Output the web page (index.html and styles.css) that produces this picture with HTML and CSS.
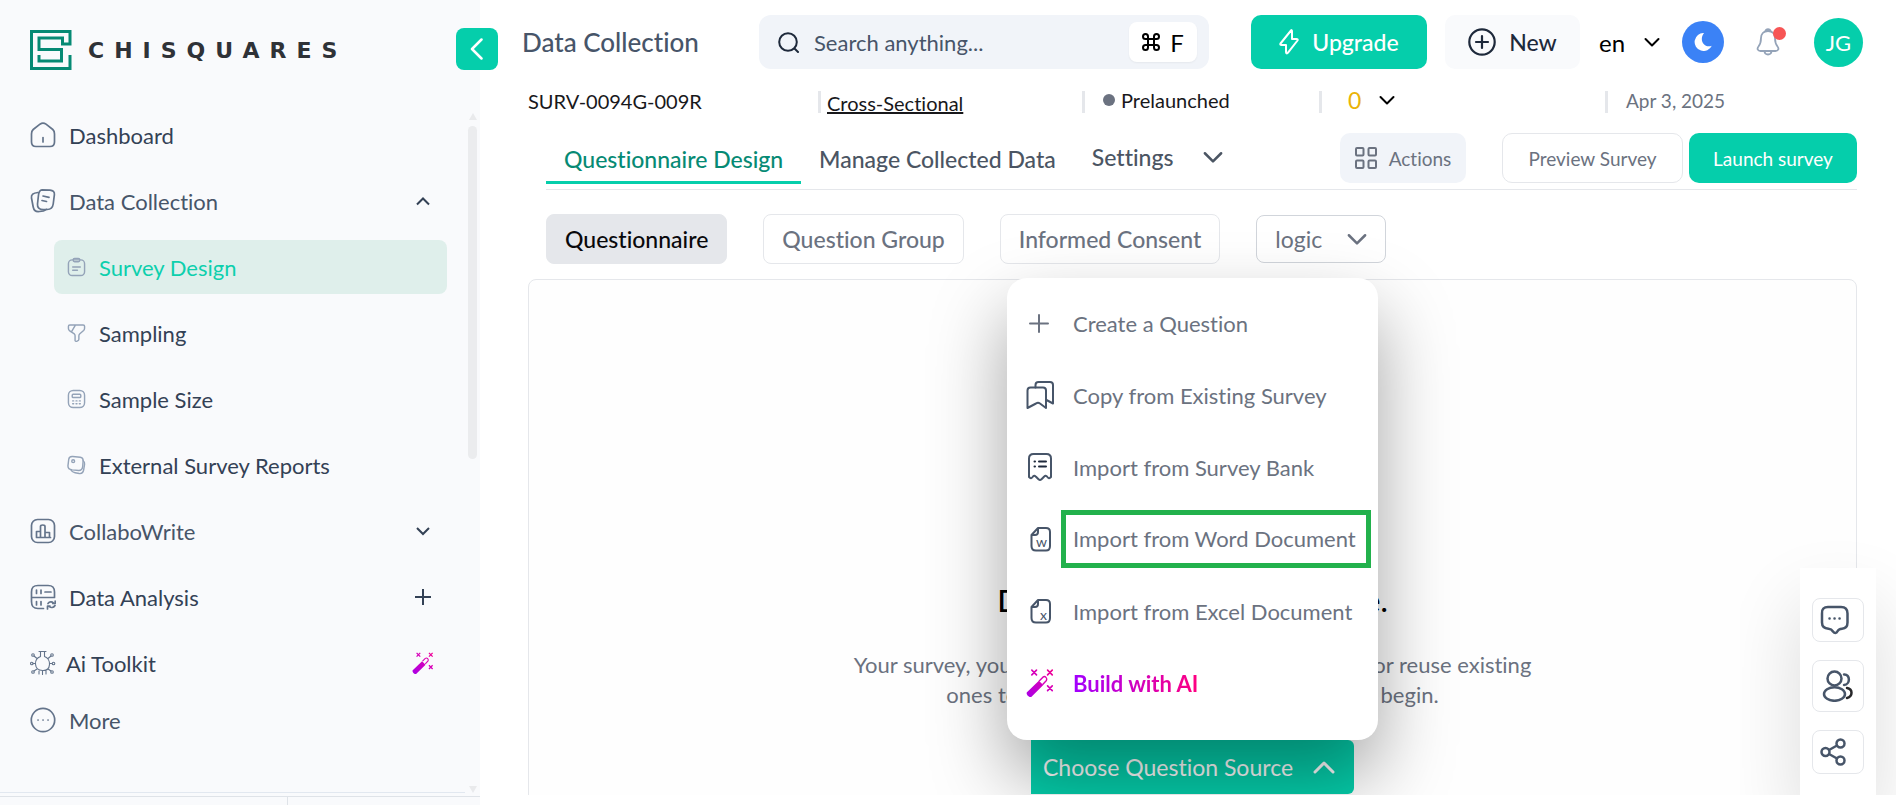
FILE: index.html
```html
<!DOCTYPE html>
<html lang="en">
<head>
    <meta charset="UTF-8">
    <meta name="viewport" content="width=device-width, initial-scale=1.0">
    <title>Chisquares - Data Collection</title>
    <link rel="stylesheet" href="styles.css">
</head>
<body>
    <aside class="sidebar">
        <div class="brand">
            <svg class="logo" width="42" height="40" viewBox="0 0 42 40" fill="none" stroke="#068a74" stroke-width="3">
                <path d="M40 25v13.500H1.500V1.500H40V14H32.500V8H9v11.500h22.500V31H9v-6"/>
            </svg>
            <span class="brand-name">CHISQUARES</span>
            <button class="collapse" aria-label="Collapse menu">
                <svg width="14" height="22" viewBox="0 0 14 22" fill="none" stroke="#fff" stroke-width="2.500" stroke-linecap="round" stroke-linejoin="round"><path d="M11.500 1.500L2 11l9.500 9.500"/></svg>
            </button>
        </div>
        <div class="nav-wrap">
            <nav class="nav">
                <a href="#" class="nav-item dark">
                    <svg class="icon" viewBox="0 0 26 26"><path d="M10 2.200L3.200 7.500C1.500 9 1.500 9.800 1.500 12v8c0 3.500 1.500 4.500 4.500 4.500h14c3 0 4.500-1 4.500-4.500v-8c0-2.200 0-3-1.700-4.500L16 2.200c-2-1.500-4-1.500-6 0z"/><path d="M13 15.500v4.500"/></svg>
                    <span>Dashboard</span>
                </a>
                <a href="#" class="nav-item">
                    <svg class="icon" viewBox="0 0 26 26"><path d="M12 1.800l8 .3c3 .3 4.700 1.800 4.400 4.500l-1.200 9.400c-.5 3.500-2.500 5.500-6 5.500h-4c-4 0-6-2-5.700-5.500l1-9c.4-3.500 1.500-5 3.500-5.200z"/><path d="M8 4.500C3 5 1 6.500 1.500 10l1.700 9c.7 3.500 3 5 6.300 4.500l4-.7c1.500-.3 2.300-.7 3-1.500M13 8l6 1.300M12 12.500l4.500 1"/></svg>
                    <span>Data Collection</span>
                    <svg class="arrow" viewBox="0 0 16 16"><path d="M2 11.500l6-6 6 6"/></svg>
                </a>
                <a href="#" class="nav-item sub active">
                    <svg class="icon small" viewBox="0 0 20 20"><rect x="1.500" y="2.500" width="17" height="16.500" rx="4"/><rect x="6.500" y="1" width="7" height="3.500" rx="1.500"/><path d="M6 10h8M6 13.500h5"/></svg>
                    <span>Survey Design</span>
                </a>
                <a href="#" class="nav-item sub dark">
                    <svg class="icon small" viewBox="0 0 20 20"><path d="M3 1.500h14c1 0 1.500.7 1.500 1.500v2c0 1-.4 1.700-1 2.300l-4 3.500c-.8.700-1 1.300-1 2.200v3.500c0 1.700-3.500 3.300-4 1.500v-5c0-.8-.2-1.400-.8-2L2.500 7.500c-.6-.7-1-1.500-1-2.300V3c0-.8.600-1.500 1.500-1.500zM9 1.500L4.500 9"/></svg>
                    <span>Sampling</span>
                </a>
                <a href="#" class="nav-item sub dark">
                    <svg class="icon small" viewBox="0 0 20 20"><rect x="1.500" y="1" width="17" height="18" rx="5"/><rect x="5.500" y="5" width="9" height="3.500" rx="1"/><path d="M6 12h1M9.500 12h1M13 12h1M6 15h1M9.500 15h1M13 15h1"/></svg>
                    <span>Sample Size</span>
                </a>
                <a href="#" class="nav-item sub dark">
                    <svg class="icon small" viewBox="0 0 20 20"><path d="M6 1l8 .8c2.300.3 3 1.500 3 3.500l-.5 6.500c-.4 2.700-1.700 4-4 4l-7-.7C2.300 14.700 1 13.500 1 11l.8-6.800C2 2 3.500.8 6 1z"/><circle cx="6.500" cy="6" r="1.500"/><path d="M17 5.500c1.500 1 1.700 2 1.500 3.500l-1 6.500c-.5 2.500-2 3.800-4.500 3.500l-4.500-.8c-2-.4-3.500-1.200-4.500-3.200"/></svg>
                    <span>External Survey Reports</span>
                </a>
                <a href="#" class="nav-item">
                    <svg class="icon" viewBox="0 0 26 26"><rect x="1.500" y="1.500" width="23" height="23" rx="6"/><path d="M6.500 19.500h14M6.500 19.500v-6h4v6M10.500 19.500v-11c0-2 4.500-2 4.500 0v11M15 14.500h4.500v5"/></svg>
                    <span>CollaboWrite</span>
                    <svg class="arrow" viewBox="0 0 16 16"><path d="M2 5l6 6 6-6"/></svg>
                </a>
                <a href="#" class="nav-item dark">
                    <svg class="icon" viewBox="0 0 26 26"><path d="M13.500 24.500H8c-5 0-6.500-2-6.500-7V8c0-5 2-6.500 6.500-6.500h10c5 0 6.500 2 6.500 6.500v5.500h-23M6.500 6v3.500M11 6v3.500M15 8h6M6.500 17.500V21M11 17.500V21M18 19.500c1.500-2 4-2 5.500-.5M25.200 17v2.500h-2.500M25 21.500c-1.500 2.500-4 2.500-6 .8M17.500 25v-2.800H20"/></svg>
                    <span>Data Analysis</span>
                    <svg class="arrow plus" viewBox="0 0 16 16"><path d="M8 0v16M0 8h16"/></svg>
                </a>
                <a href="#" class="nav-item dark ai">
                    <svg class="icon thin" viewBox="0 0 26 26"><path d="M9 1.500h7M10.500 1.500v5C3.500 9 3.500 20 12.500 20.500S21.500 9 14.500 6.500v-5M4 6l3 2.500M21 6l-3 2.500M3 13.500h2M20 13.500h2M4 21l3-2M21 21l-3-2M9 21v3M12.500 21v3.500M16 21v3"/><circle cx="3" cy="5" r="1.300"/><circle cx="22" cy="5" r="1.300"/><circle cx="1.800" cy="13.500" r="1.300"/><circle cx="23.500" cy="13.500" r="1.300"/><circle cx="3" cy="22" r="1.300"/><circle cx="22" cy="22" r="1.300"/></svg>
                    <span>Ai Toolkit</span>
                    <svg class="arrow wand" viewBox="0 0 24 24"><use href="#wand"/></svg>
                </a>
                <a href="#" class="nav-item more">
                    <svg class="icon" viewBox="0 0 26 26"><circle cx="13" cy="13" r="11.700"/><path d="M8 13h.1M13 13h.1M18 13h.1"/></svg>
                    <span>More</span>
                </a>
            </nav>
            <div class="scrollbar">
                <i class="up"></i>
                <i class="thumb"></i>
                <i class="down"></i>
            </div>
        </div>
        <div class="sidebar-foot"><div></div></div>
    </aside>

    <main class="main">
        <header class="topbar">
            <h1>Data Collection</h1>
            <label class="search">
                <svg width="22" height="22" viewBox="0 0 22 22" fill="none" stroke="#1e293b" stroke-width="2" stroke-linecap="round"><circle cx="10" cy="11" r="8.800"/><path d="M17 18l3 3"/></svg>
                <input type="text" placeholder="Search anything..." aria-label="Search">
                <kbd>
                    <svg width="18" height="18" viewBox="0 0 18 18" fill="none" stroke="#000" stroke-width="2"><path d="M6 6H3.500A2.500 2.500 0 1 1 6 3.500v11A2.500 2.500 0 1 1 3.500 12h11a2.500 2.500 0 1 1-2.500 2.500v-11A2.500 2.500 0 1 1 14.500 6z"/></svg>
                    F
                </kbd>
            </label>
            <button class="btn upgrade">
                <svg width="20" height="26" viewBox="0 0 20 26" fill="none" stroke="#fff" stroke-width="2" stroke-linejoin="round"><path d="M12 1.500L1.500 14.500c-.5 1 0 1.500 1 1.500H7v7c0 1.500 1 2 2 .7L18.500 11.500c.5-1 0-1.500-1-1.500H13V2.500C13 1 12.500.8 12 1.500z"/></svg>
                Upgrade
            </button>
            <button class="btn new">
                <svg width="28" height="28" viewBox="0 0 28 28" fill="none" stroke="#1e293b" stroke-width="2.200" stroke-linecap="round"><circle cx="14" cy="14" r="12.700"/><path d="M14 8v12M8 14h12"/></svg>
                New
            </button>
            <div class="pick lang">
                <select aria-label="Language"><option>en</option></select>
                <svg class="chev" viewBox="0 0 16 16"><path d="M1.500 5l6.500 6.500L14.500 5"/></svg>
            </div>
            <button class="moon" aria-label="Dark mode">
                <svg width="18" height="18" viewBox="0 0 18 18" fill="#fff"><path d="M10 0a9 9 0 1 0 7.800 12.700c-8.300 2.700-13-6.200-7.800-12.700z"/></svg>
            </button>
            <button class="bell" aria-label="Notifications">
                <svg width="24" height="28" viewBox="0 0 24 28" fill="none" stroke="#94a3b8" stroke-width="1.800"><path d="M12 3C7.500 3 5 6 5 10c0 4.500-.5 6-2.500 8.500C.5 21 2 23 4.500 23h15c2.500 0 4-2 2-4.500C19.500 16 19 14.500 19 10c0-4-2.500-7-7-7zM9.500 3c.5-2.500 4.500-2.500 5 0M8.500 23.500c.5 4 6.500 4 7 0"/></svg>
                <i></i>
            </button>
            <button class="avatar">JG</button>
        </header>

        <div class="meta">
            <div class="id">SURV-0094G-009R</div>
            <div class="bar"><a href="#">Cross-Sectional</a></div>
            <div class="bar status"><i></i>Prelaunched</div>
            <div class="bar pick count">
                <select aria-label="Responses"><option>0</option></select>
                <svg class="chev" viewBox="0 0 16 16"><path d="M1.500 5l6.500 6.500L14.500 5"/></svg>
            </div>
            <div class="bar date">Apr 3, 2025</div>
        </div>

        <div class="tabs">
            <button class="tab active">Questionnaire Design</button>
            <button class="tab">Manage Collected Data</button>
            <button class="tab settings">Settings
                <svg class="chev big" viewBox="0 0 16 16"><path d="M1.500 5l6.500 6.500L14.500 5"/></svg>
            </button>
            <button class="btn actions">
                <svg width="22" height="22" viewBox="0 0 22 22" fill="none" stroke="#6b7280" stroke-width="2"><rect x="1" y="1" width="7.500" height="7.500" rx="1"/><rect x="13.500" y="1" width="7.500" height="7.500" rx="1"/><rect x="1" y="13.500" width="7.500" height="7.500" rx="1"/><rect x="13.500" y="13.500" width="7.500" height="7.500" rx="1"/></svg>
                Actions
            </button>
            <button class="btn preview">Preview Survey</button>
            <button class="btn launch">Launch survey</button>
        </div>

        <div class="subtabs">
            <button class="pill active">Questionnaire</button>
            <button class="pill">Question Group</button>
            <button class="pill">Informed Consent</button>
            <div class="pick logic">
                <select aria-label="Logic"><option>logic</option></select>
                <svg class="chev big" viewBox="0 0 16 16"><path d="M1.500 5l6.500 6.500L14.500 5"/></svg>
            </div>
        </div>

        <section class="panel">
            <h2>Develop Your Questionnaire.</h2>
            <p>Your survey, your rules. Compose your own questions or reuse existing<br>ones to save time. Choose a source below to begin.</p>
            <div class="source">
                <button class="source-btn">Choose Question Source
                    <svg width="22" height="14" viewBox="0 0 22 14" fill="none" stroke="currentColor" stroke-width="3" stroke-linecap="round" stroke-linejoin="round"><path d="M2 12l9-9 9 9"/></svg>
                </button>
                <div class="menu">
                    <button class="menu-item create">
                        <svg viewBox="0 0 28 28"><path d="M13 6v17M4 14.500h18"/></svg>
                        <span>Create a Question</span>
                    </button>
                    <button class="menu-item">
                        <svg viewBox="0 0 28 28"><path d="M4.500 6.500H17c2 0 3 1 3 3V27l-6-4.500c-1.500-1-2.500-1-4 0L1.500 27V9.500c0-2 1-3 3-3z"/><path d="M9.500 6.500V4c0-2 1-3 3-3H24c2 0 3 1 3 3v18.500l-6.500-3.500"/></svg>
                        <span>Copy from Existing Survey</span>
                    </button>
                    <button class="menu-item">
                        <svg viewBox="0 0 28 28"><path d="M3 24V5.500C3 2.500 4.500 1 7.500 1h13c3 0 4.500 1.500 4.500 4.500V24c-1.500 1.700-2.500 1.500-4-.5-1.300-1-2.200-1-3 .3l-2.500 2.500c-1 .8-2 .8-3 0L10 23.800c-1-1.300-2-1.300-3-.3-1.500 2-2.500 2.200-4 .5z"/><path d="M13 8.500h7M13 13.500h7M8.500 8.500h.5M8.500 13.500h.5" stroke="#1e293b"/></svg>
                        <span>Import from Survey Bank</span>
                    </button>
                    <button class="menu-item picked">
                        <svg viewBox="0 0 28 28"><path d="M12 3h8c3 0 4 1.500 4 4v14c0 3-1.500 4.500-4 4.500H10c-3 0-4.500-1.500-4.500-4.500V10zM12 3v4c0 2-1 3-3 3H5.500"/><text x="10" y="22">w</text></svg>
                        <span>Import from Word Document</span>
                    </button>
                    <button class="menu-item">
                        <svg viewBox="0 0 28 28"><path d="M12 3h8c3 0 4 1.500 4 4v14c0 3-1.500 4.500-4 4.500H10c-3 0-4.500-1.500-4.500-4.500V10zM12 3v4c0 2-1 3-3 3H5.500"/><text x="14" y="23">x</text></svg>
                        <span>Import from Excel Document</span>
                    </button>
                    <button class="menu-item build">
                        <svg viewBox="0 0 24 24">
                            <defs>
                                <linearGradient id="magic" gradientUnits="userSpaceOnUse" x1="0" y1="24" x2="24" y2="0"><stop offset="0" stop-color="#a800e8"/><stop offset=".6" stop-color="#d800b8"/><stop offset="1" stop-color="#f5008c"/></linearGradient>
                                <g id="wand" fill="none" stroke="none">
                                    <path d="M.8 20L11 10l3.800 3.800L4.500 24c-1.500 1-5-2.500-3.700-4z" fill="url(#magic)"/>
                                    <path d="M11.500 10l3-3c2-1.500 4 1 3 2.800L14.500 13" stroke="url(#magic)" stroke-width="1.200"/>
                                    <path d="M5 1l4 4M9 1L5 5M18.500 1l4 4M22.500 1l-4 4M18.500 14.500l4 4M22.500 14.500l-4 4" stroke="url(#magic)" stroke-width="1.400"/>
                                </g>
                            </defs>
                            <use href="#wand"/>
                        </svg>
                        <span>Build with AI</span>
                    </button>
                </div>
            </div>
        </section>
    </main>

    <div class="dock">
        <button aria-label="Chat">
            <svg width="30" height="30" viewBox="0 0 30 30"><path d="M8 2h13c4 0 6.500 2 6.500 6.500v9c0 4-2 6-5.500 6.300-2.500.2-3.500.5-4.500 2.500-1 2.300-3 2.300-4.500.2-1.200-2-2-2.500-4.500-2.700-4-.3-6.500-2-6.500-6.300v-9C1.500 4 4 2 8 2z"/><path d="M9.500 13.500h.1M14.500 13.500h.1M19.500 13.500h.1"/></svg>
        </button>
        <button class="people" aria-label="Collaborators">
            <svg width="32" height="32" viewBox="0 0 32 32"><circle cx="12.500" cy="8.500" r="7"/><ellipse cx="12.500" cy="24" rx="10.500" ry="6.800"/><path d="M22 4.500c6.500-.5 6.500 10 0 10.500"/><path d="M25 18c6 1 6 8.500 0 10" stroke="#27272a"/></svg>
        </button>
        <button aria-label="Share">
            <svg width="28" height="28" viewBox="0 0 28 28"><circle cx="5.500" cy="14" r="4"/><circle cx="20.500" cy="5.500" r="4"/><circle cx="20.500" cy="22.500" r="4"/><path d="M9 12l8-4.500M9 16l8 4.500"/></svg>
        </button>
    </div>
</body>
</html>
```
FILE: styles.css
```css
* {
    box-sizing: border-box;
}
body {
    display: flex;
    margin: 0;
    height: 100vh;
    overflow: hidden;
    font-family: Lato, "Liberation Sans", sans-serif;
    font-size: 22px;
    font-variant-ligatures: none;
    background-color: #fff;
    color: #475569;
}
button, input, select {
    font: inherit;
    font-variant-ligatures: none;
    color: inherit;
    border: none;
    background: none;
    padding: 0;
    margin: 0;
    cursor: pointer;
}
a {
    color: inherit;
    text-decoration: none;
}

/* sidebar */
.sidebar {
    display: flex;
    flex-direction: column;
    flex: none;
    width: 480px;
    background-color: #f9fafc;
}
.brand {
    display: flex;
    align-items: center;
    flex: none;
    height: 108px;
    padding: 0 0 8px 30px;
}
.brand-name {
    margin-left: 16px;
    font-family: "DejaVu Sans", sans-serif;
    font-size: 22px;
    font-weight: bold;
    letter-spacing: 10px;
    color: #2f3237;
}
.collapse {
    position: absolute;
    left: 456px;
    top: 28px;
    z-index: 2;
    display: grid;
    place-items: center;
    width: 42px;
    height: 42px;
    border-radius: 8px;
    background-color: #05ceab;
}
.nav-wrap {
    display: flex;
    flex: 1;
    min-height: 0;
}
.nav {
    display: flex;
    flex-direction: column;
    gap: 12px;
    flex: 1;
    overflow: hidden;
    border-bottom: 1px solid #e2e8f0;
    margin-bottom: 3px;
}
.nav-item {
    display: flex;
    align-items: center;
    flex: none;
    gap: 13px;
    height: 54px;
    margin-right: 18px;
    padding: 0 16px 0 30px;
}
.nav-item.dark {
    color: #334155;
}
.nav-item.sub {
    margin-left: 54px;
    padding-left: 13px;
    border-radius: 8px;
}
.nav-item.active {
    color: #0dcfad;
    background-color: #dfefeb;
}
.nav-item.ai {
    gap: 10px;
}
.nav-item.more {
    height: 36px;
}
.icon {
    width: 26px;
    height: 26px;
    fill: none;
    stroke: #64748b;
    stroke-width: 1.700;
    stroke-linecap: round;
    stroke-linejoin: round;
}
.icon.small {
    width: 19px;
    height: 20px;
    stroke: #94a3b8;
    stroke-width: 1.500;
}
.icon.thin {
    stroke-width: 1.100;
}
.arrow {
    width: 16px;
    height: 16px;
    margin-left: auto;
    fill: none;
    stroke: #334155;
    stroke-width: 2;
}
.arrow.wand {
    width: 22px;
    height: 22px;
    margin-right: -3px;
}
.scrollbar {
    display: flex;
    flex-direction: column;
    align-items: center;
    width: 9px;
    margin: 5px 3px 3px;
}
.scrollbar i {
    border: 4px solid transparent;
}
.scrollbar .up {
    border-top: none;
    border-bottom: 7px solid #e9eaec;
    margin-bottom: 6px;
}
.scrollbar .thumb {
    flex: none;
    width: 9px;
    height: 49%;
    border: none;
    border-radius: 5px;
    background-color: #ebecee;
}
.scrollbar .down {
    border-bottom: none;
    border-top: 7px solid #e9eaec;
    margin-top: auto;
}
.sidebar-foot {
    flex: none;
    height: 9px;
    border-top: 1px solid #dfe3e8;
}
.sidebar-foot div {
    width: 60%;
    height: 100%;
    border-right: 1px solid #dfe3e8;
}

/* main column */
.main {
    flex: 1;
    min-width: 0;
    margin-bottom: 10px;
    padding: 15px 39px 0 48px;
    overflow: hidden;
}
.topbar {
    display: flex;
    align-items: center;
    height: 54px;
    margin: 0 -6px;
}
h1 {
    flex: none;
    width: 237px;
    margin: 0;
    font-size: 26px;
    font-weight: 500;
    color: #475569;
}
.search {
    display: flex;
    align-items: center;
    flex: 1;
    gap: 14px;
    height: 54px;
    margin-right: 42px;
    padding: 0 12px 0 19px;
    border-radius: 12px;
    background-color: #f1f4f9;
}
.search svg {
    flex: none;
}
.search input {
    flex: 1;
    min-width: 0;
    outline: none;
}
.search input::placeholder {
    color: #475569;
    opacity: 1;
}
kbd {
    display: flex;
    align-items: center;
    justify-content: center;
    gap: 10px;
    width: 68px;
    height: 40px;
    border-radius: 8px;
    background-color: #fff;
    box-shadow: 0 1px 2px rgba(0, 0, 0, 0.05);
    font-family: inherit;
    font-size: 24px;
    color: #000;
}
.btn {
    display: flex;
    align-items: center;
    justify-content: center;
    flex: none;
    height: 50px;
    border-radius: 10px;
}
.upgrade, .new {
    gap: 13px;
    height: 54px;
    font-size: 23px;
    font-weight: 500;
}
.upgrade {
    width: 176px;
    background-color: #05ceab;
    color: #fff;
}
.new {
    width: 135px;
    margin: 0 19px 0 18px;
    background-color: #f9fafc;
    color: #1e293b;
}
.pick {
    position: relative;
    display: flex;
    align-items: center;
}
.pick select {
    appearance: none;
    outline: none;
}
.pick .chev {
    position: absolute;
    right: 0;
    pointer-events: none;
}
.chev {
    width: 16px;
    height: 16px;
    fill: none;
    stroke: currentColor;
    stroke-width: 2;
    stroke-linecap: round;
    stroke-linejoin: round;
}
.chev.big {
    width: 20px;
    height: 20px;
}
.lang {
    width: 61px;
    margin-right: 22px;
    font-size: 24px;
    color: #000;
}
.lang select {
    width: 100%;
}
.moon {
    display: grid;
    place-items: center;
    width: 42px;
    height: 42px;
    margin-right: 32px;
    border-radius: 50%;
    background-color: #3b82f6;
}
.bell {
    position: relative;
    width: 24px;
    height: 28px;
    margin-right: 34px;
}
.bell i {
    position: absolute;
    top: -1px;
    right: -6px;
    width: 13px;
    height: 13px;
    border-radius: 50%;
    background-color: #f75555;
}
.bell svg, .moon svg {
    display: block;
}
.avatar {
    width: 49px;
    height: 49px;
    border-radius: 50%;
    background-color: #05ceab;
    color: #fff;
}

/* survey details */
.meta {
    display: grid;
    grid-template-columns: 290fr 264fr 237fr 286fr 252fr;
    margin-top: 22px;
    font-size: 20px;
    line-height: 20px;
    color: #18181b;
}
.bar {
    height: 22px;
    padding-left: 6px;
    border-left: 3px solid #e5e7eb;
}
.bar a {
    display: inline-block;
    padding-top: 2px;
    text-decoration: underline;
}
.status {
    display: flex;
    align-items: center;
    padding: 0 0 4px 18px;
}
.status i {
    width: 12px;
    height: 12px;
    margin-right: 6px;
    border-radius: 50%;
    background-color: #6b7280;
}
.count {
    justify-self: start;
    width: 76px;
    padding: 0 0 4px 26px;
    font-size: 23px;
    color: #000;
}
.count select {
    width: 100%;
    color: #eab308;
}
.date {
    padding-left: 18px;
    font-size: 19px;
    color: #6b7280;
}

/* tabs */
.tabs {
    display: flex;
    align-items: flex-start;
    height: 57px;
    margin: 20px 0 0 18px;
    border-bottom: 1px solid #e5e7eb;
}
.tab {
    height: 51px;
    padding: 4px 18px 0;
    border-bottom: 3px solid transparent;
    font-size: 23px;
    font-weight: 500;
    color: #4b5563;
    white-space: nowrap;
}
.tab.active {
    border-bottom-color: #05ceab;
    color: #068a74;
}
.settings {
    display: flex;
    align-items: center;
    gap: 30px;
    padding-top: 0;
}
.actions {
    gap: 12px;
    width: 126px;
    margin: 0 36px 0 auto;
    background-color: #f1f4f9;
    font-size: 19px;
    color: #6b7280;
}
.preview {
    width: 181px;
    margin-right: 6px;
    border: 1px solid #e5e7eb;
    font-size: 19px;
    color: #6b7280;
}
.launch {
    width: 168px;
    background-color: #05ceab;
    font-size: 19px;
    color: #fff;
}
.subtabs {
    display: flex;
    align-items: center;
    gap: 36px;
    margin: 24px 0 0 18px;
}
.pill {
    height: 50px;
    padding: 0 18px;
    border: 1px solid #e5e7eb;
    border-radius: 8px;
    color: #6b7280;
    font-size: 23px;
    font-weight: 500;
}
.pill.active {
    background-color: #e5e7eb;
    color: #09090b;
}
.logic {
    width: 130px;
    height: 48px;
    border: 1px solid #d1d5db;
    border-radius: 8px;
    font-size: 23px;
    color: #6b7280;
}
.logic select {
    width: 100%;
    height: 100%;
    padding-left: 18px;
}
.logic .chev {
    right: 18px;
}

/* question source */
.panel {
    display: flex;
    flex-direction: column;
    align-items: center;
    min-height: 640px;
    margin-top: 15px;
    padding-top: 302px;
    border: 1px solid #e5e7eb;
    border-radius: 8px;
    background-color: #fefefe;
    text-align: center;
}
h2 {
    margin: 0;
    font-size: 31px;
    font-weight: 500;
    line-height: 36px;
    color: #000;
}
.panel p {
    margin: 32px 0 0;
    line-height: 30px;
    color: #6b7280;
}
.source {
    position: relative;
    margin-top: 30px;
}
.source-btn {
    display: flex;
    align-items: center;
    gap: 20px;
    width: 323px;
    height: 54px;
    padding-left: 12px;
    border-radius: 0 6px 6px 0;
    background-color: #05ceab;
    font-size: 23px;
    color: #fff;
    white-space: nowrap;
}
.menu {
    position: absolute;
    left: -24px;
    right: -24px;
    bottom: 100%;
    padding: 9px 0 21px;
    border-radius: 20px;
    background-color: #fff;
    box-shadow: 0 36px 75px rgba(0, 0, 0, 0.36);
}
.menu-item {
    display: flex;
    align-items: center;
    gap: 9px;
    width: 100%;
    height: 72px;
    padding-left: 19px;
    color: #6b7280;
    white-space: nowrap;
}
.menu-item svg {
    flex: none;
    width: 28px;
    height: 28px;
    fill: none;
    stroke: #475569;
    stroke-width: 2;
    stroke-linejoin: round;
    stroke-linecap: round;
}
.menu-item.create svg {
    stroke: #6b7280;
}
.menu-item text {
    font-size: 14px;
    fill: #475569;
    stroke: none;
}
.menu-item span {
    padding-left: 10px;
}
.picked {
    gap: 7px;
}
.picked span {
    width: 310px;
    height: 58px;
    padding: 0 0 0 7px;
    border: 5px solid #22b14c;
    line-height: 48px;
    text-align: left;
}
.build span {
    margin-left: 10px;
    padding-left: 0;
    background: linear-gradient(90deg, #a100ff, #ff0080);
    background-clip: text;
    -webkit-background-clip: text;
    color: transparent;
    font-weight: bold;
}

/* floating tools */
.dock {
    position: fixed;
    right: 20px;
    bottom: 10px;
    display: flex;
    flex-direction: column;
    align-items: center;
    gap: 18px;
    width: 76px;
    padding: 30px 0 21px;
    background-color: #fff;
    box-shadow: 0 36px 75px rgba(0, 0, 0, 0.14);
    clip-path: inset(-60px -60px 0 -60px);
}
.dock button {
    display: flex;
    align-items: center;
    width: 52px;
    height: 44px;
    padding-left: 7px;
    border: 1px solid #e5e7eb;
    border-radius: 8px;
}
.dock button.people {
    height: 52px;
    padding-left: 9px;
}
.dock svg {
    fill: none;
    stroke: #475569;
    stroke-width: 2.500;
    stroke-linecap: round;
}
```
